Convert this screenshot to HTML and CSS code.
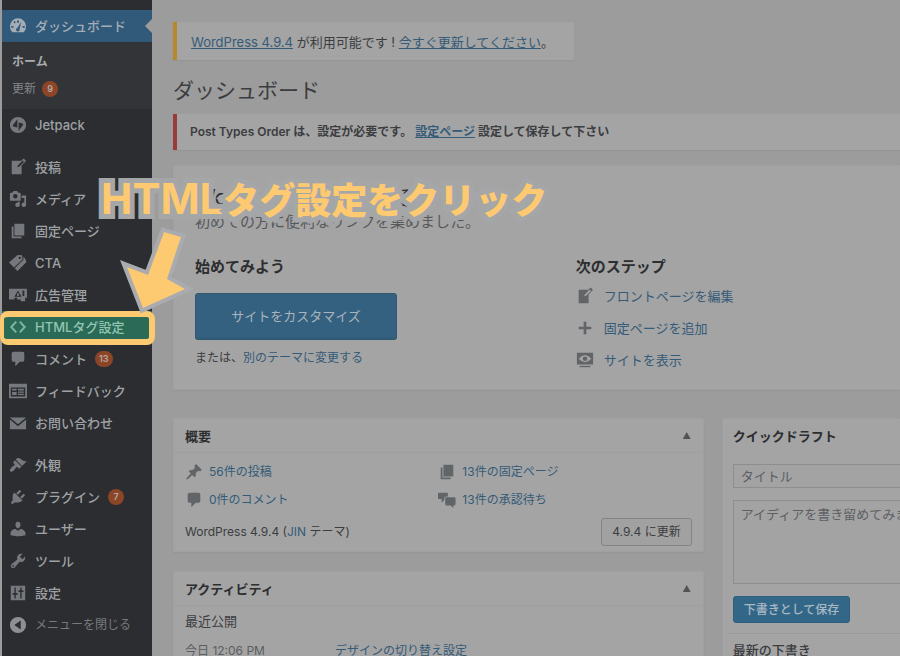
FILE: index.html
```html
<!DOCTYPE html>
<html lang="ja">
<head>
<meta charset="utf-8">
<meta name="viewport" content="width=device-width, initial-scale=1">
<title>ダッシュボード</title>
<link rel="stylesheet" href="styles.css">
</head>
<body>
<svg class="sprite" aria-hidden="true">
  <symbol id="i-dash" viewBox="0 0 20 20"><path fill-rule="evenodd" d="M3.8 17A9 9 0 1 1 16.200 17zM9 4v2.500h2V4zM5 5.800l1.300 1.300 1.300-1.300-1.300-1.300zM2.500 10v2H5v-2zM15 10v2h2.500v-2zM13.800 5.200l-4.600 7a2 2 0 1 0 2.500 1.100z"/></symbol>
  <symbol id="i-jet" viewBox="0 0 20 20"><path fill-rule="evenodd" d="M10 1a9 9 0 1 0 0 18 9 9 0 0 0 0-18zM9.300 3.500v9.300L5.700 12c-1.300-.4-1.700-1.200-1.100-2.300zM10.700 16.500V7.200l3.600.8c1.300.4 1.700 1.200 1.100 2.300z"/></symbol>
  <symbol id="i-write" viewBox="0 0 20 20"><path fill-rule="evenodd" d="M16.89 1.2l1.41 1.41c.39.39.39 1.020 0 1.410L14 8.330V18H3V3h10.670l1.800-1.800c.4-.39 1.030-.4 1.420 0zm-5.660 8.480l5.370-5.360-1.420-1.420-5.360 5.370-.71 2.120z"/></symbol>
  <symbol id="i-media" viewBox="0 0 20 20"><path fill-rule="evenodd" d="M13 11V4c0-.55-.45-1-1-1h-1.670L9 1H5L3.670 3H2c-.55 0-1 .45-1 1v7c0 .55.45 1 1 1h10c.55 0 1-.45 1-1zM7 4.500a2.500 2.500 0 1 1 0 5 2.500 2.500 0 0 1 0-5zM14 6h5v10.500a2.500 2.500 0 1 1-2-2.450V9h-3zM10 14.050V13h2v3.500a2.500 2.500 0 1 1-2-2.450z"/></symbol>
  <symbol id="i-page" viewBox="0 0 20 20"><path d="M6 15V2h11v13zM5 16h9v2H3V5h2z"/></symbol>
  <symbol id="i-tag" viewBox="0 0 20 20"><path fill-rule="evenodd" d="M0 9.500L9.500 1l5 .5.500 4.500-9.500 9zM12 3a1.300 1.300 0 1 0 0 2.600A1.300 1.300 0 0 0 12 3z"/><path d="M16 3l1.500 1.500L19.500 9 9.500 19l-3.200-3.200L16 6.500z"/></symbol>
  <symbol id="i-ad" viewBox="0 0 20 20"><path fill-rule="evenodd" d="M0 3h20v10h-2v4h-5v-2H9v-2H6v2H0zM10 5l-4 7h8zM15 5v6h2V5z"/><path d="M9 8h2v3H9z"/></symbol>
  <symbol id="i-code" viewBox="0 0 20 20"><path d="M8 4L2.500 10 8 16M12 4l5.500 6-5.500 6" fill="none" stroke="currentColor" stroke-width="2.200"/></symbol>
  <symbol id="i-comment" viewBox="0 0 20 20"><path d="M5 2h10q.82 0 1.410.59T17 4v7q0 .82-.59 1.410T15 13h-3l-5 5v-5H5q-.82 0-1.410-.59T3 11V4q0-.82.59-1.410T5 2z"/></symbol>
  <symbol id="i-comments" viewBox="0 0 20 20"><path d="M1 2h9q1 0 1 1v3H9q-2 0-2 2v2l-3 3V9H1q-1 0-1-1V3q0-1 1-1z"/><path d="M9 7h9q1.500 0 1.500 1.500v6q0 1.500-1.500 1.500h-1v3l-3-3H9.500Q8 16 8 14.500v-6Q8 7 9 7z"/></symbol>
  <symbol id="i-feedback" viewBox="0 0 20 20"><path fill-rule="evenodd" d="M0 2h20v16H0zM2 6v10h16V6zM3.500 7.500h5v2h-5zM3.500 11h5v3.500h-5zM10 7.500h6.500v2H10zM10 10.500h6.500v1.500H10zM10 13h6.500v1.500H10z"/></symbol>
  <symbol id="i-mail" viewBox="0 0 20 20"><path d="M1 4h18l-9 7.500zM1 6l9 7.500L19 6v11H1z"/></symbol>
  <symbol id="i-brush" viewBox="0 0 20 20"><path d="M14.480 11.060L7.410 3.990l1.500-1.500c.5-.56 2.300-.47 3.510.32 1.210.8 1.430 1.280 2.910 2.100 1.180.64 2.450 1.260 4.450.85zm-.71.71L6.700 4.700 4.930 6.470c-.39.39-.39 1.020 0 1.410l1.060 1.060c.39.39.39 1.030 0 1.420-.6.6-1.430 1.110-2.210 1.690-.35.26-.7.53-1.010.84C1.430 14.230.4 16.080 1.400 17.070c.99 1 2.840-.03 4.180-1.360.31-.31.58-.66.85-1.020.57-.78 1.080-1.610 1.690-2.210.39-.39 1.020-.39 1.410 0l1.060 1.060c.39.39 1.020.39 1.410 0z"/></symbol>
  <symbol id="i-plug" viewBox="0 0 20 20"><path d="M13.110 4.360L9.870 7.600 8 5.730l3.240-3.240c.35-.34 1.050-.2 1.560.32.52.51.66 1.210.31 1.550zm-8 1.770l.91-1.120 9.010 9.010-1.190.84c-.71.71-2.630 1.160-3.820 1.160H6.140L4.900 17.260c-.59.59-1.540.59-2.120 0-.59-.58-.59-1.530 0-2.120l1.240-1.240v-3.880c0-1.130.4-3.190 1.090-3.890zm7.260 3.970l3.240-3.240c.34-.35 1.040-.21 1.550.31.52.51.66 1.210.31 1.550l-3.240 3.250z"/></symbol>
  <symbol id="i-user" viewBox="0 0 20 20"><path d="M10 9.250c-2.270 0-2.730-3.440-2.730-3.440C7 4.020 7.820 2 9.970 2c2.160 0 2.980 2.020 2.710 3.810 0 0-.41 3.440-2.680 3.440zm0 2.570L12.720 10c2.390 0 5.520 2.330 5.520 4.530v2.490s-4.650 1.130-8.240 1.130c-3.650 0-8.240-1.130-8.240-1.130v-2.490c0-2.250 2.940-4.480 5.470-4.480z"/></symbol>
  <symbol id="i-tool" viewBox="0 0 20 20"><path fill-rule="evenodd" d="M16.680 9.770c-1.340 1.340-3.300 1.670-4.950.99l-5.410 6.520c-.99.99-2.590.99-3.580 0s-.99-2.590 0-3.570l6.520-5.420c-.68-1.650-.35-3.610.99-4.950 1.280-1.280 3.120-1.620 4.720-1.060l-2.890 2.890 2.820 2.820 2.860-2.870c.53 1.580.18 3.390-1.080 4.650zM3.810 16.210c.4.39 1.040.39 1.430 0 .4-.4.4-1.040 0-1.430-.39-.4-1.030-.4-1.430 0-.39.39-.39 1.030 0 1.430z"/></symbol>
  <symbol id="i-settings" viewBox="0 0 20 20"><path fill-rule="evenodd" d="M2 2h16v16H2zM6 4v6H4v2h2v4h1.500v-4h2v-2h-2V4zM12.500 4v3h-2v2h2v7H14V9h2V7h-2V4z"/></symbol>
  <symbol id="i-collapse" viewBox="0 0 20 20"><path fill-rule="evenodd" d="M10 1a9 9 0 1 0 0 18 9 9 0 0 0 0-18zM13 5v10l-7-5z"/></symbol>
  <symbol id="i-pin" viewBox="0 0 20 20"><path d="M10.440 3.020l1.820-1.820 6.360 6.350-1.830 1.820c-1.050-.68-2.480-.57-3.410.36l-.75.75c-.92.93-1.040 2.350-.35 3.410l-1.830 1.820-2.410-2.410-2.800 2.790c-.42.42-3.380 2.710-3.800 2.290s1.860-3.390 2.280-3.810l2.790-2.790L4.100 9.360l1.830-1.820c1.050.69 2.480.57 3.400-.36l.75-.75c.93-.92 1.050-2.350.36-3.410z"/></symbol>
  <symbol id="i-plus" viewBox="0 0 20 20"><path d="M8.500 3h3v5.500H17v3h-5.500V17h-3v-5.500H3v-3h5.500z"/></symbol>
  <symbol id="i-view" viewBox="0 0 20 20"><path fill-rule="evenodd" d="M1 2h18v13H1zM3 8.500q7-8 14 0-7 8-14 0zM10 6a2.500 2.500 0 1 0 0 5 2.500 2.500 0 0 0 0-5z"/><circle cx="10.500" cy="8" r="1"/><path d="M4 16.500h12V18H4z"/></symbol>
</svg>

<div class="page">
  <nav class="sidebar" aria-label="管理メニュー">
    <ul class="menu">
      <li><a class="item current" href="#"><svg class="icon"><use href="#i-dash"/></svg>ダッシュボード</a>
        <ul class="submenu">
          <li><a class="home" href="#">ホーム</a></li>
          <li><a href="#">更新 <span class="badge">9</span></a></li>
        </ul>
      </li>
      <li><a class="item" href="#"><svg class="icon"><use href="#i-jet"/></svg>Jetpack</a></li>
    </ul>
    <ul class="menu">
      <li><a class="item" href="#"><svg class="icon"><use href="#i-write"/></svg>投稿</a></li>
      <li><a class="item" href="#"><svg class="icon"><use href="#i-media"/></svg>メディア</a></li>
      <li><a class="item" href="#"><svg class="icon"><use href="#i-page"/></svg>固定ページ</a></li>
      <li><a class="item" href="#"><svg class="icon"><use href="#i-tag"/></svg>CTA</a></li>
      <li><a class="item" href="#"><svg class="icon"><use href="#i-ad"/></svg>広告管理</a></li>
      <li class="target"><a class="item" href="#"><svg class="icon"><use href="#i-code"/></svg>HTMLタグ設定</a>
        <svg class="arrow" viewBox="0 0 90 90" aria-hidden="true"><path d="M53 10L70 15L56 57L74 67L32 86L16 45L37 53Z"/></svg>
      </li>
      <li><a class="item" href="#"><svg class="icon"><use href="#i-comment"/></svg>コメント <span class="badge">13</span></a></li>
      <li><a class="item" href="#"><svg class="icon"><use href="#i-feedback"/></svg>フィードバック</a></li>
      <li><a class="item" href="#"><svg class="icon"><use href="#i-mail"/></svg>お問い合わせ</a></li>
    </ul>
    <ul class="menu">
      <li><a class="item" href="#"><svg class="icon"><use href="#i-brush"/></svg>外観</a></li>
      <li><a class="item" href="#"><svg class="icon"><use href="#i-plug"/></svg>プラグイン <span class="badge">7</span></a></li>
      <li><a class="item" href="#"><svg class="icon"><use href="#i-user"/></svg>ユーザー</a></li>
      <li><a class="item" href="#"><svg class="icon"><use href="#i-tool"/></svg>ツール</a></li>
      <li><a class="item" href="#"><svg class="icon"><use href="#i-settings"/></svg>設定</a></li>
      <li><button class="item collapse" type="button"><svg class="icon"><use href="#i-collapse"/></svg>メニューを閉じる</button></li>
    </ul>
  </nav>

  <main class="main">
    <p class="notice update"><a href="#">WordPress 4.9.4</a> が利用可能です ! <a href="#">今すぐ更新してください</a>。</p>
    <h1>ダッシュボード</h1>
    <p class="notice error">Post Types Order は、設定が必要です。 <a href="#">設定ページ</a> 設定して保存して下さい</p>

    <section class="panel welcome">
      <h2>WordPress へようこそ !</h2>
      <p class="lead">初めての方に便利なリンクを集めました。</p>
      <div class="columns">
        <div>
          <h3>始めてみよう</h3>
          <button class="hero" type="button">サイトをカスタマイズ</button>
          <p class="or">または、<a href="#">別のテーマに変更する</a></p>
        </div>
        <div>
          <h3>次のステップ</h3>
          <ul class="steps">
            <li><svg class="icon"><use href="#i-write"/></svg><a href="#">フロントページを編集</a></li>
            <li><svg class="icon"><use href="#i-plus"/></svg><a href="#">固定ページを追加</a></li>
            <li><svg class="icon"><use href="#i-view"/></svg><a href="#">サイトを表示</a></li>
          </ul>
        </div>
      </div>
    </section>

    <div class="widgets">
      <div class="stack">
        <section class="panel">
          <header><h2>概要</h2><button class="toggle" type="button" aria-label="概要を閉じる"></button></header>
          <div class="body">
            <ul class="counts">
              <li><svg class="icon"><use href="#i-pin"/></svg><a href="#">56件の投稿</a></li>
              <li><svg class="icon"><use href="#i-page"/></svg><a href="#">13件の固定ページ</a></li>
              <li><svg class="icon"><use href="#i-comment"/></svg><a href="#">0件のコメント</a></li>
              <li><svg class="icon"><use href="#i-comments"/></svg><a href="#">13件の承認待ち</a></li>
            </ul>
            <div class="version"><p>WordPress 4.9.4 (<a href="#">JIN</a> テーマ)</p><button class="small" type="button">4.9.4 に更新</button></div>
          </div>
        </section>
        <section class="panel">
          <header><h2>アクティビティ</h2><button class="toggle" type="button" aria-label="アクティビティを閉じる"></button></header>
          <div class="body activity">
            <h3>最近公開</h3>
            <div class="entry"><span>今日 12:06 PM</span><a href="#">デザインの切り替え設定</a></div>
          </div>
        </section>
      </div>
      <section class="panel draft">
        <header><h2>クイックドラフト</h2></header>
        <form>
          <input type="text" placeholder="タイトル" aria-label="タイトル">
          <textarea placeholder="アイディアを書き留めてみましょう。" aria-label="内容"></textarea>
          <button class="save" type="button">下書きとして保存</button>
        </form>
        <h3>最新の下書き</h3>
      </section>
    </div>
  </main>
  <p class="callout"><span>HTML</span>タグ設定をクリック</p>
</div>
</body>
</html>
```

FILE: styles.css
```css
* { box-sizing: border-box; }
html, body { height: 100%; }
body {
  margin: 0;
  overflow: hidden;
  background: #9c9c9c;
  color: #3b3d40;
  font: 400 13px/20px Inter, "Noto Sans CJK JP", sans-serif;
}
h1, h2, h3, p, ul { margin: 0; padding: 0; }
ul { list-style: none; }
a { color: #345b78; text-decoration: none; }
button, input, textarea { font: inherit; }
.sprite { position: absolute; width: 0; height: 0; }
.icon { width: 18px; height: 18px; flex: none; fill: currentColor; }

.page {
  position: relative;
  display: flex;
  height: 100%;
  overflow: hidden;
  padding-left: 2px;
}

/* Sidebar */
.sidebar {
  flex: none;
  width: 150px;
  padding-top: 10px;
  background: #2b2d30;
}
.menu { margin-bottom: 10px; }
.item {
  position: relative;
  display: flex;
  align-items: center;
  width: 100%;
  height: 32px;
  padding: 0 0 0 7px;
  gap: 8px;
  border: 0;
  background: none;
  color: #9fa2a5;
  font-weight: 500;
  white-space: nowrap;
}
.item .icon { color: #75797d; }
.item.current { background: #31597a; color: #a4adb5; }
.item.current .icon { color: #a4adb5; }
.current::after {
  content: "";
  position: absolute;
  right: 0;
  border: 7px solid transparent;
  border-right-color: #9c9c9c;
  border-left: 0;
}
.item.collapse { color: #777a7d; font-size: 12px; font-weight: 400; }
.collapse .icon { color: #8d9093; }
.submenu { padding: 6px 0 7px; background: #323437; }
.submenu a {
  display: flex;
  align-items: center;
  height: 27px;
  padding-left: 10px;
  gap: 6px;
  color: #83868a;
  font-size: 12px;
}
.submenu .home { color: #a9abad; font-weight: 700; }
.badge {
  min-width: 16px;
  padding: 0 4px;
  border-radius: 8px;
  background: #8d4527;
  color: #b2aaa6;
  font-size: 9px;
  font-weight: 600;
  line-height: 16px;
  text-align: center;
}
.target { position: relative; }
.target .item { background: #2a6a57; color: #93c5b2; }
.target .item .icon { color: #7fb5a1; }
.target::after {
  content: "";
  position: absolute;
  inset: 0 -3px -2px -2px;
  border: 6px solid #fdc971;
  border-width: 6px 6px 6px 4px;
  border-radius: 8px;
}
.arrow {
  position: absolute;
  z-index: 2;
  left: 109px;
  bottom: 31px;
  width: 90px;
  height: 90px;
  overflow: visible;
}
.arrow path {
  fill: #fdc971;
  stroke: #a9abaf;
  stroke-width: 8px;
  paint-order: stroke;
}

/* Main column */
.main { flex: 1; min-width: 0; padding: 22px 0 0 21px; }
.notice {
  padding: 8px 20px 8px 13px;
  border-left: 4px solid #b7892b;
  background: #a4a4a4;
  box-shadow: 0 1px 1px #959595;
}
.notice a { text-decoration: underline; }
.update { width: fit-content; padding: 10px 20px 8px 14px; }
.error { border-color: #983b3d; font-weight: 600; font-size: 12px; }
h1 { padding: 17px 0 9px; font-size: 21px; line-height: 28px; font-weight: 400; }
.panel {
  border: 1px solid #a0a0a0;
  background: #a4a4a4;
  box-shadow: 0 1px 2px #959595;
}
.welcome { margin: 15px 0 28px; padding: 19px 0 13px 21px; border-right: 0; }
.welcome h2 { font-size: 21px; line-height: 26px; font-weight: 400; color: #2c2e30; }
.welcome .lead { font-size: 15px; line-height: 22px; color: #56595c; }
.columns { display: grid; grid-template-columns: 54% 1fr; margin-top: 22px; }
.welcome h3 { font-size: 15px; line-height: 24px; font-weight: 700; color: #2c2e30; }
.hero {
  display: block;
  width: 202px;
  height: 46px;
  margin: 14px 0 9px;
  border: 1px solid #2f5873;
  border-radius: 3px;
  background: #34617f;
  color: #a9b4bc;
  box-shadow: 0 1px 0 #2f5873;
}
.or { font-size: 12px; }
.steps { padding-top: 1px; }
.steps li { display: flex; align-items: center; gap: 10px; height: 32px; }
.steps .icon, .counts .icon { color: #626568; }

.widgets { display: grid; grid-template-columns: 73% 1fr; gap: 18px; align-items: start; }
.stack { display: grid; gap: 19px; }
.widgets header {
  display: flex;
  align-items: center;
  justify-content: space-between;
  height: 34px;
  padding: 0 12px 0 11px;
  border-bottom: 1px solid #9f9f9f;
}
.widgets h2 { font-size: 13px; line-height: 20px; font-weight: 700; color: #2c2e30; }
.toggle {
  width: 8px;
  height: 7px;
  padding: 0;
  border: 0;
  background: #515457;
  clip-path: polygon(50% 0, 100% 100%, 0 100%);
}
.body { padding: 5px 11px; }
.counts { display: grid; grid-template-columns: 1fr 1fr; font-size: 12px; }
.counts li { display: flex; align-items: center; gap: 6px; height: 28px; }
.version {
  display: flex;
  align-items: center;
  justify-content: space-between;
  margin-top: 4px;
  font-size: 12px;
}
.small {
  height: 28px;
  padding: 0 10px;
  border: 1px solid #848484;
  border-radius: 3px;
  background: #a1a1a1;
  color: #3b3d40;
}
.activity h3 { margin: 0 0 10px; font-size: 13px; font-weight: 400; }
.entry { display: flex; font-size: 12px; }
.entry span { width: 150px; color: #5b5e61; }
.draft { padding-bottom: 12px; border-right: 0; overflow: hidden; white-space: nowrap; }
.draft header { border-bottom-color: #a4a4a4; padding-left: 10px; }
.draft form {
  display: flex;
  flex-direction: column;
  align-items: flex-start;
  gap: 12px;
  padding: 11px 0 10px 10px;
}
.draft input, .draft textarea {
  width: 100%;
  padding: 0 0 0 7px;
  border: 1px solid #8e8e8e;
  border-right: 0;
  border-radius: 0;
  background: #a3a3a3;
  outline: 0;
}
.draft input { height: 24px; }
.draft textarea {
  height: 84px;
  padding-top: 3px;
  resize: none;
  overflow: hidden;
  white-space: pre;
}
::placeholder { color: #5d6063; opacity: 1; }
.save {
  height: 27px;
  padding: 0 10px;
  border: 1px solid #2f5f80;
  border-radius: 3px;
  background: #336788;
  color: #a9b8c3;
  font-size: 12px;
  font-weight: 500;
}
.draft > h3 {
  margin-left: 5px;
  padding: 1px 0 0 5px;
  border-top: 1px solid #989898;
  font-size: 13px;
  font-weight: 500;
  line-height: 30px;
}

/* Callout over the dashboard */
.callout {
  position: absolute;
  z-index: 3;
  left: 101px;
  top: 174px;
  color: #fdc971;
  font: 900 36px/48px "Noto Sans CJK JP", sans-serif;
  white-space: nowrap;
  -webkit-text-stroke: 10px #a5a6a8;
  paint-order: stroke fill;
}
.callout span { font: 700 42px/48px Inter, sans-serif; }
```
